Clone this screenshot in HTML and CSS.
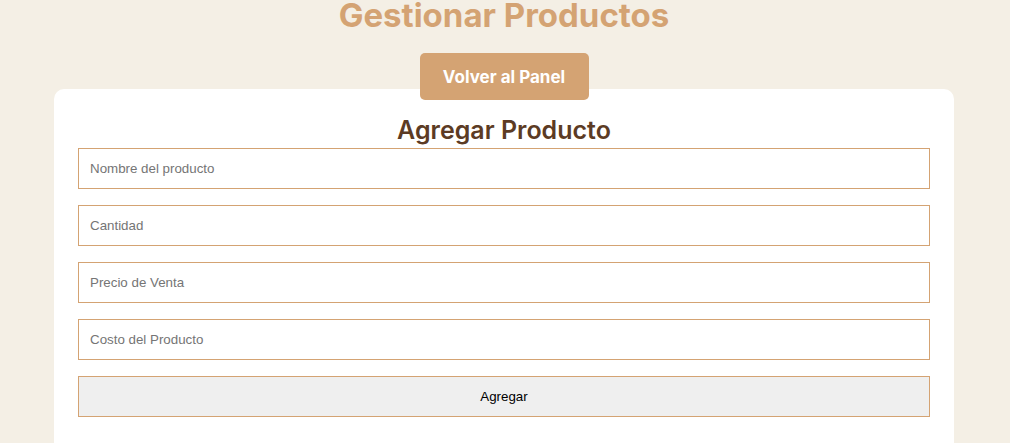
FILE: index.html
```html
<!DOCTYPE html>
<html lang="es">
<head>
<meta charset="utf-8">
<title>Gestionar Productos</title>
<link rel="stylesheet" href="styles.css">
</head>
<body>
<main class="page">
  <h1 class="page-title">Gestionar Productos</h1>
  <a class="back-btn" href="#">Volver al Panel</a>
  <section class="card">
    <h2 class="card-title">Agregar Producto</h2>
    <form class="form">
      <input class="field" type="text" placeholder="Nombre del producto">
      <input class="field" type="text" placeholder="Cantidad">
      <input class="field" type="text" placeholder="Precio de Venta">
      <input class="field" type="text" placeholder="Costo del Producto">
      <button class="submit" type="button">Agregar</button>
    </form>
  </section>
</main>
</body>
</html>
```
FILE: styles.css
```css
* { box-sizing: border-box; }
html, body { margin: 0; padding: 0; }
body {
  background: #f4efe5;
  font-family: "Inter", "Open Sans", sans-serif;
  height: 443px;
  overflow: hidden;
}
.page {
  display: flex;
  flex-direction: column;
  align-items: center;
  padding-right: 2px;
}
.page-title {
  margin: 0;
  font-size: 33px;
  line-height: 30px;
  font-weight: 700;
  color: #d4a373;
}
.back-btn {
  position: relative;
  z-index: 1;
  margin-top: 23px;
  display: flex;
  align-items: center;
  justify-content: center;
  width: 169px;
  height: 47px;
  background: #d4a373;
  color: #fff;
  border-radius: 5px;
  text-decoration: none;
  font-weight: 700;
  font-size: 17px;
}
.card {
  margin-top: -11px;
  width: 900px;
  background: #fff;
  border-radius: 10px;
  padding: 24px 24px 40px;
}
.card-title {
  margin: 0;
  text-align: center;
  font-size: 25px;
  line-height: 35px;
  font-weight: 600;
  color: #5c3b24;
}
.form {
  display: flex;
  flex-direction: column;
  gap: 16px;
}
.field, .submit {
  width: 100%;
  height: 41px;
  border: 1px solid #d4a373;
  border-radius: 0;
  font-family: "Liberation Sans", Arial, sans-serif;
  font-size: 13.33px;
  margin: 0;
}
.field {
  padding: 0 11px;
  background: #fff;
  color: #222;
}
.field::placeholder { color: #757575; }
.submit {
  background: #efefef;
  color: #000;
  cursor: pointer;
}
```
